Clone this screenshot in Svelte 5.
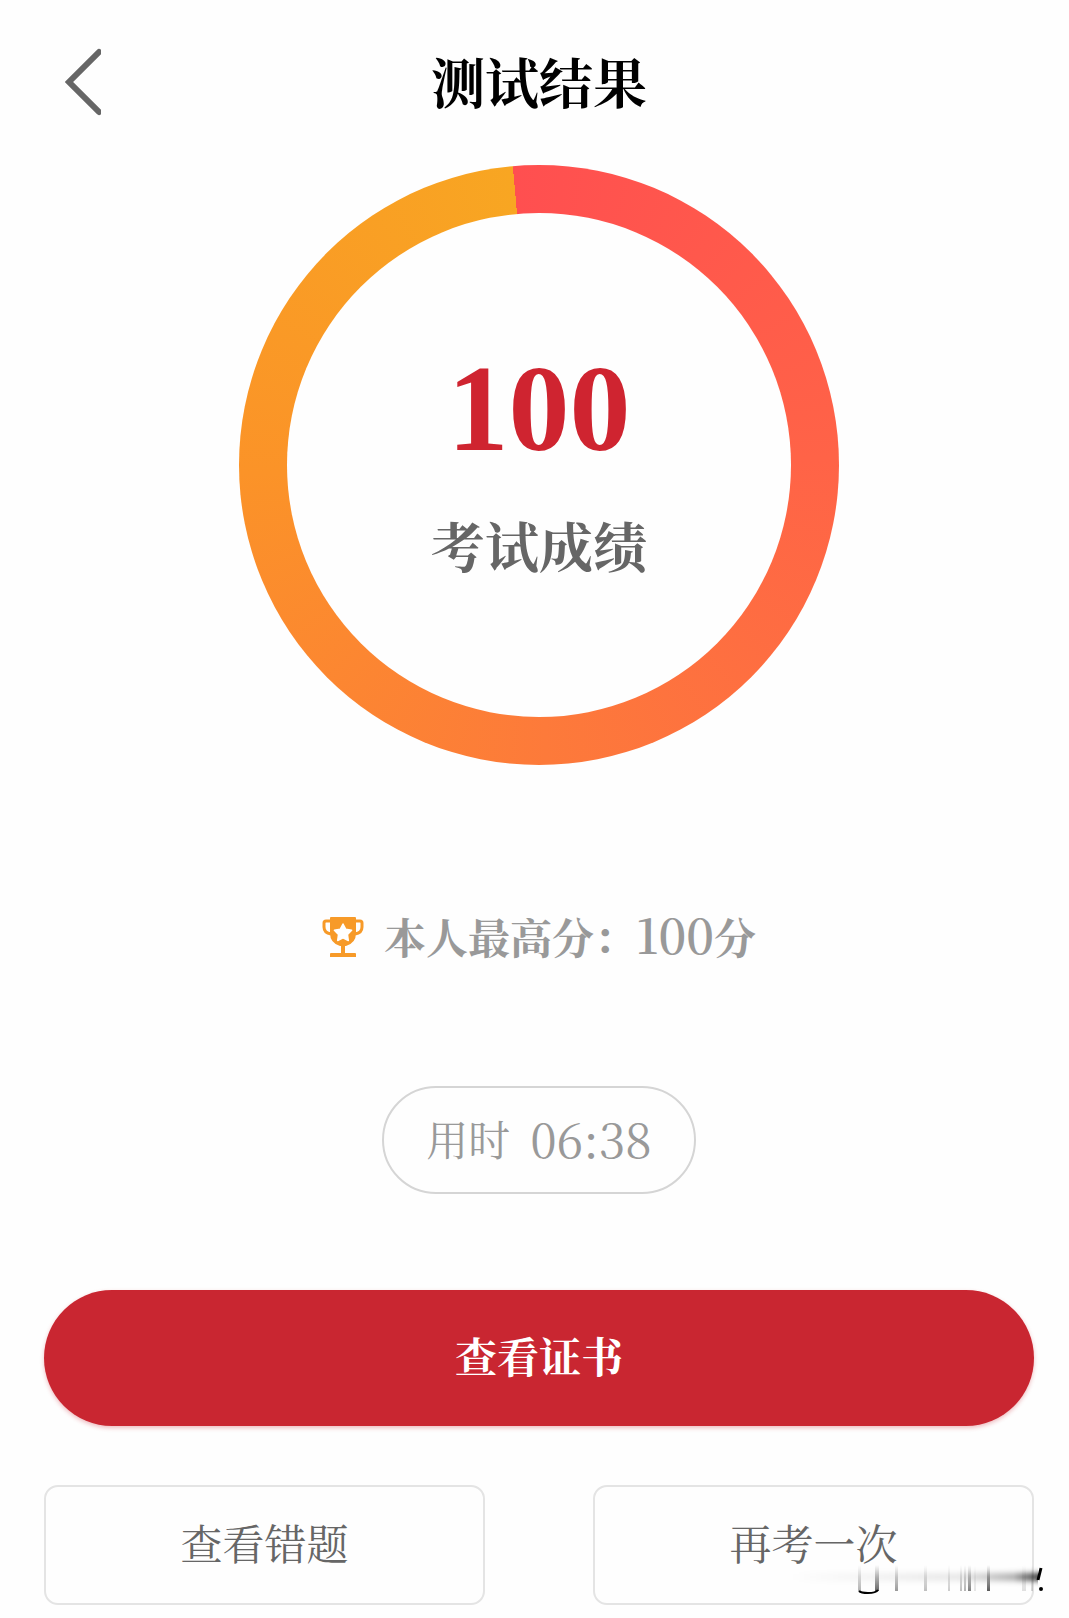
<script>
  let score = 100;
  let best = 100;
  let duration = '06:38';

  // x, width and opacity of each faded stroke
  const streaks = [
    [68, 3, 0.3], [85, 4, 0.6], [105, 3, 0.4],
    [134, 3, 0.25], [158, 2, 0.2], [170, 2, 0.25], [174, 2, 0.3], [178, 3, 0.5],
    [184, 2, 0.1], [197, 3, 0.65], [232, 4, 0.12], [241, 2, 0.15]
  ];
</script>

<main class="page">
  <header class="topbar">
    <button class="back" aria-label="返回">
      <svg width="36" height="68" viewBox="0 0 36 68" fill="none" stroke="#666" stroke-width="6" stroke-linecap="round">
        <path d="M34 4 L4 34 L34 64" />
      </svg>
    </button>
    <h1>测试结果</h1>
  </header>

  <section class="ring">
    <div class="ring-inner">
      <strong class="score">{score}</strong>
      <span class="score-label">考试成绩</span>
    </div>
  </section>

  <p class="best">
    <svg width="42" height="42" viewBox="0 0 42 42">
      <path d="M9 5H4Q2 5 2 7V11Q2 17 9 18 M33 5H38Q40 5 40 7V11Q40 17 33 18" fill="none" stroke="#f79a28" stroke-width="3" />
      <path d="M9 1H33Q34 1 34 2V17Q34 27 24 30H23V37H33Q34 37 34 38V41H8V38Q8 37 9 37H19V30H18Q8 27 8 17V2Q8 1 9 1Z" fill="#f79a28" />
      <path d="M21 8L23.800 13.300L29.600 14.300L25.500 18.600L26.300 24.500L21 21.900L15.700 24.500L16.500 18.600L12.400 14.300L18.200 13.300Z" fill="#fff" stroke="#fff" stroke-width="1.500" stroke-linejoin="round" />
    </svg>
    <span>本人最高分：<b>{best}</b>分</span>
  </p>

  <p class="duration">用时 <span>{duration}</span></p>

  <button class="primary">查看证书</button>

  <div class="actions">
    <button class="secondary">查看错题</button>
    <div class="retry">
      <button class="secondary">再考一次</button>
      <svg class="trace" width="256" height="34" viewBox="0 0 256 34" aria-hidden="true">
        <defs>
          <linearGradient id="fade" x2="0" y2="1">
            <stop offset="0" stop-color="#000" stop-opacity="0" />
            <stop offset="1" stop-color="#000" />
          </linearGradient>
          <linearGradient id="sweep">
            <stop offset="0" stop-color="#000" stop-opacity="0" />
            <stop offset="0.7" stop-color="#000" stop-opacity="0.12" />
            <stop offset="0.9" stop-color="#000" stop-opacity="0.4" />
            <stop offset="1" stop-color="#000" />
          </linearGradient>
          <filter id="soft" x="-5%" y="-200%" width="110%" height="500%">
            <feGaussianBlur stdDeviation="0 3" />
          </filter>
        </defs>
        <rect x="0" y="11" width="248" height="6" fill="url(#sweep)" filter="url(#soft)" />
        {#each streaks as [x, width, opacity]}
          <rect {x} y="2" {width} height="26" fill="url(#fade)" {opacity} />
        {/each}
        <path d="M69 28Q71 30 78 30Q86 30 88 27" fill="none" stroke="#000" stroke-width="2" />
        <path d="M251 5L248 17" stroke="#000" stroke-width="3" />
        <circle cx="251" cy="26" r="2" />
      </svg>
    </div>
  </div>
</main>

<style>
  :global(body) {
    margin: 0;
    background: #fefefe;
  }

  .page {
    display: flex;
    flex-direction: column;
    align-items: center;
    padding: 40px 35px 12px 44px;
    font-family: "Noto Serif CJK SC", "Liberation Serif", "Noto Sans CJK SC", serif;
    color: #999;
  }

  .topbar {
    display: grid;
    grid-template-columns: 60px 1fr 60px;
    align-items: center;
    width: 100%;
    height: 84px;
  }

  h1 {
    margin: 0;
    padding-bottom: 2px;
    font-size: 54px;
    line-height: 80px;
    text-align: center;
    color: #000;
  }

  button {
    font-family: inherit;
    font-size: 42px;
    cursor: pointer;
  }

  .back {
    display: flex;
    justify-content: flex-end;
    padding: 0 3px 0 0;
    border: none;
    background: none;
  }

  .ring {
    box-sizing: border-box;
    width: 600px;
    height: 600px;
    margin-top: 41px;
    padding: 48px;
    border-radius: 50%;
    background: conic-gradient(from -5deg, #ff4f50, #ff6347 26%, #fd7a3a 51%, #fb9328 76%, #f8a622);
  }

  .ring-inner {
    display: flex;
    flex-direction: column;
    align-items: center;
    height: 100%;
    border-radius: 50%;
    background: #fefefe;
  }

  .score {
    margin-top: 128px;
    font-family: "Liberation Serif", serif;
    font-size: 122px;
    line-height: 136px;
    color: #cf2430;
  }

  .score-label {
    margin-top: 28px;
    font-size: 54px;
    font-weight: bold;
    line-height: 80px;
    color: #666;
  }

  .best {
    display: flex;
    align-items: center;
    gap: 20px;
    margin: 139px 0 0;
    font-size: 42px;
    font-weight: bold;
    line-height: 60px;
  }

  .best span {
    padding-bottom: 4px;
  }

  .best b,
  .duration span {
    font-size: 48px;
    line-height: 60px;
  }

  .best b {
    font-weight: 600;
  }

  .duration {
    display: flex;
    align-items: center;
    gap: 20px;
    margin: 116px 0 0;
    padding: 20px 42px 24px;
    border: 2px solid #d5d5d5;
    border-radius: 54px;
    font-size: 42px;
    line-height: 60px;
  }

  .primary {
    width: 100%;
    height: 136px;
    margin-top: 96px;
    padding: 0 0 6px;
    border: none;
    border-radius: 68px;
    background: #c92631;
    box-shadow: 0 2px 4px rgba(201, 38, 49, 0.3);
    color: #fff;
    font-weight: bold;
  }

  .actions {
    display: grid;
    grid-template-columns: 1fr 1fr;
    gap: 108px;
    width: 100%;
    margin-top: 59px;
  }

  .retry {
    position: relative;
  }

  .secondary {
    width: 100%;
    height: 120px;
    padding: 0 0 6px;
    border: 2px solid #e4e4e4;
    border-radius: 14px;
    background: #fefefe;
    color: #666;
  }

  .trace {
    position: absolute;
    right: -12px;
    bottom: 8px;
    pointer-events: none;
  }
</style>
